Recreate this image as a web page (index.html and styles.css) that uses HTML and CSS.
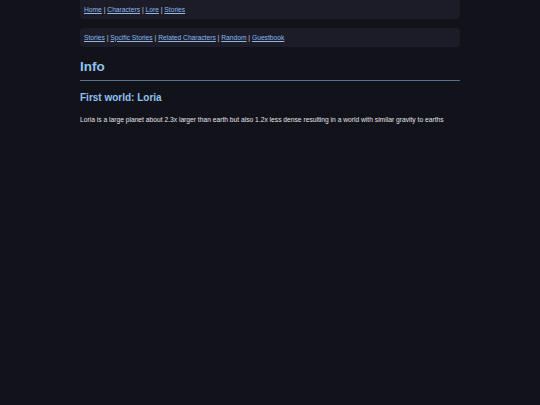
FILE: index.html
```html
<!DOCTYPE html>
<html>
<head>
<meta charset="utf-8">
<link rel="stylesheet" href="styles.css">
</head>
<body>
<div class="page">
  <nav class="nav nav-top">
    <a href="#">Home</a> | <a href="#">Characters</a> | <a href="#">Lore</a> | <a href="#">Stories</a>
  </nav>
  <nav class="nav nav-sub">
    <a href="#">Stories</a> | <a href="#">Spcific Stories</a> | <a href="#">Related Characters</a> | <a href="#">Random</a> | <a href="#">Guestbook</a>
  </nav>
  <h1 class="title">Info</h1>
  <h2 class="subtitle">First world: Loria</h2>
  <p class="text">Loria is a large planet about 2.3x larger than earth but also 1.2x less dense resulting in a world with similar gravity to earths</p>
</div>
</body>
</html>
```

FILE: styles.css
```css
html, body {
  margin: 0;
  padding: 0;
  background: #12121b;
  height: 100%;
}
body {
  font-family: "Liberation Sans", Arial, sans-serif;
  color: #e4e4e8;
}
.page {
  width: 380px;
  margin: 0 auto;
}
.nav {
  background: #1c1c28;
  font-size: 6.7px;
  color: #c8c8d0;
  padding: 0 4px;
  display: flex;
  align-items: center;
  white-space: pre;
}
.nav a {
  color: #8db8e8;
  text-decoration: underline;
}
.nav-top {
  height: 19px;
  border-radius: 0 0 4px 4px;
}
.nav-sub {
  height: 18.5px;
  margin-top: 9px;
  border-radius: 4px;
}
.title {
  margin: 11px 0 0;
  font-size: 13.5px;
  line-height: 18px;
  font-weight: bold;
  color: #8ec2ee;
  padding-bottom: 4px;
  border-bottom: 1.5px solid #56708f;
}
.subtitle {
  margin: 10px 0 0;
  font-size: 10px;
  line-height: 13px;
  font-weight: bold;
  color: #8ec2ee;
}
.text {
  margin: 12px 0 0;
  font-size: 6.7px;
  line-height: 8px;
  color: #e4e4e8;
}
```
